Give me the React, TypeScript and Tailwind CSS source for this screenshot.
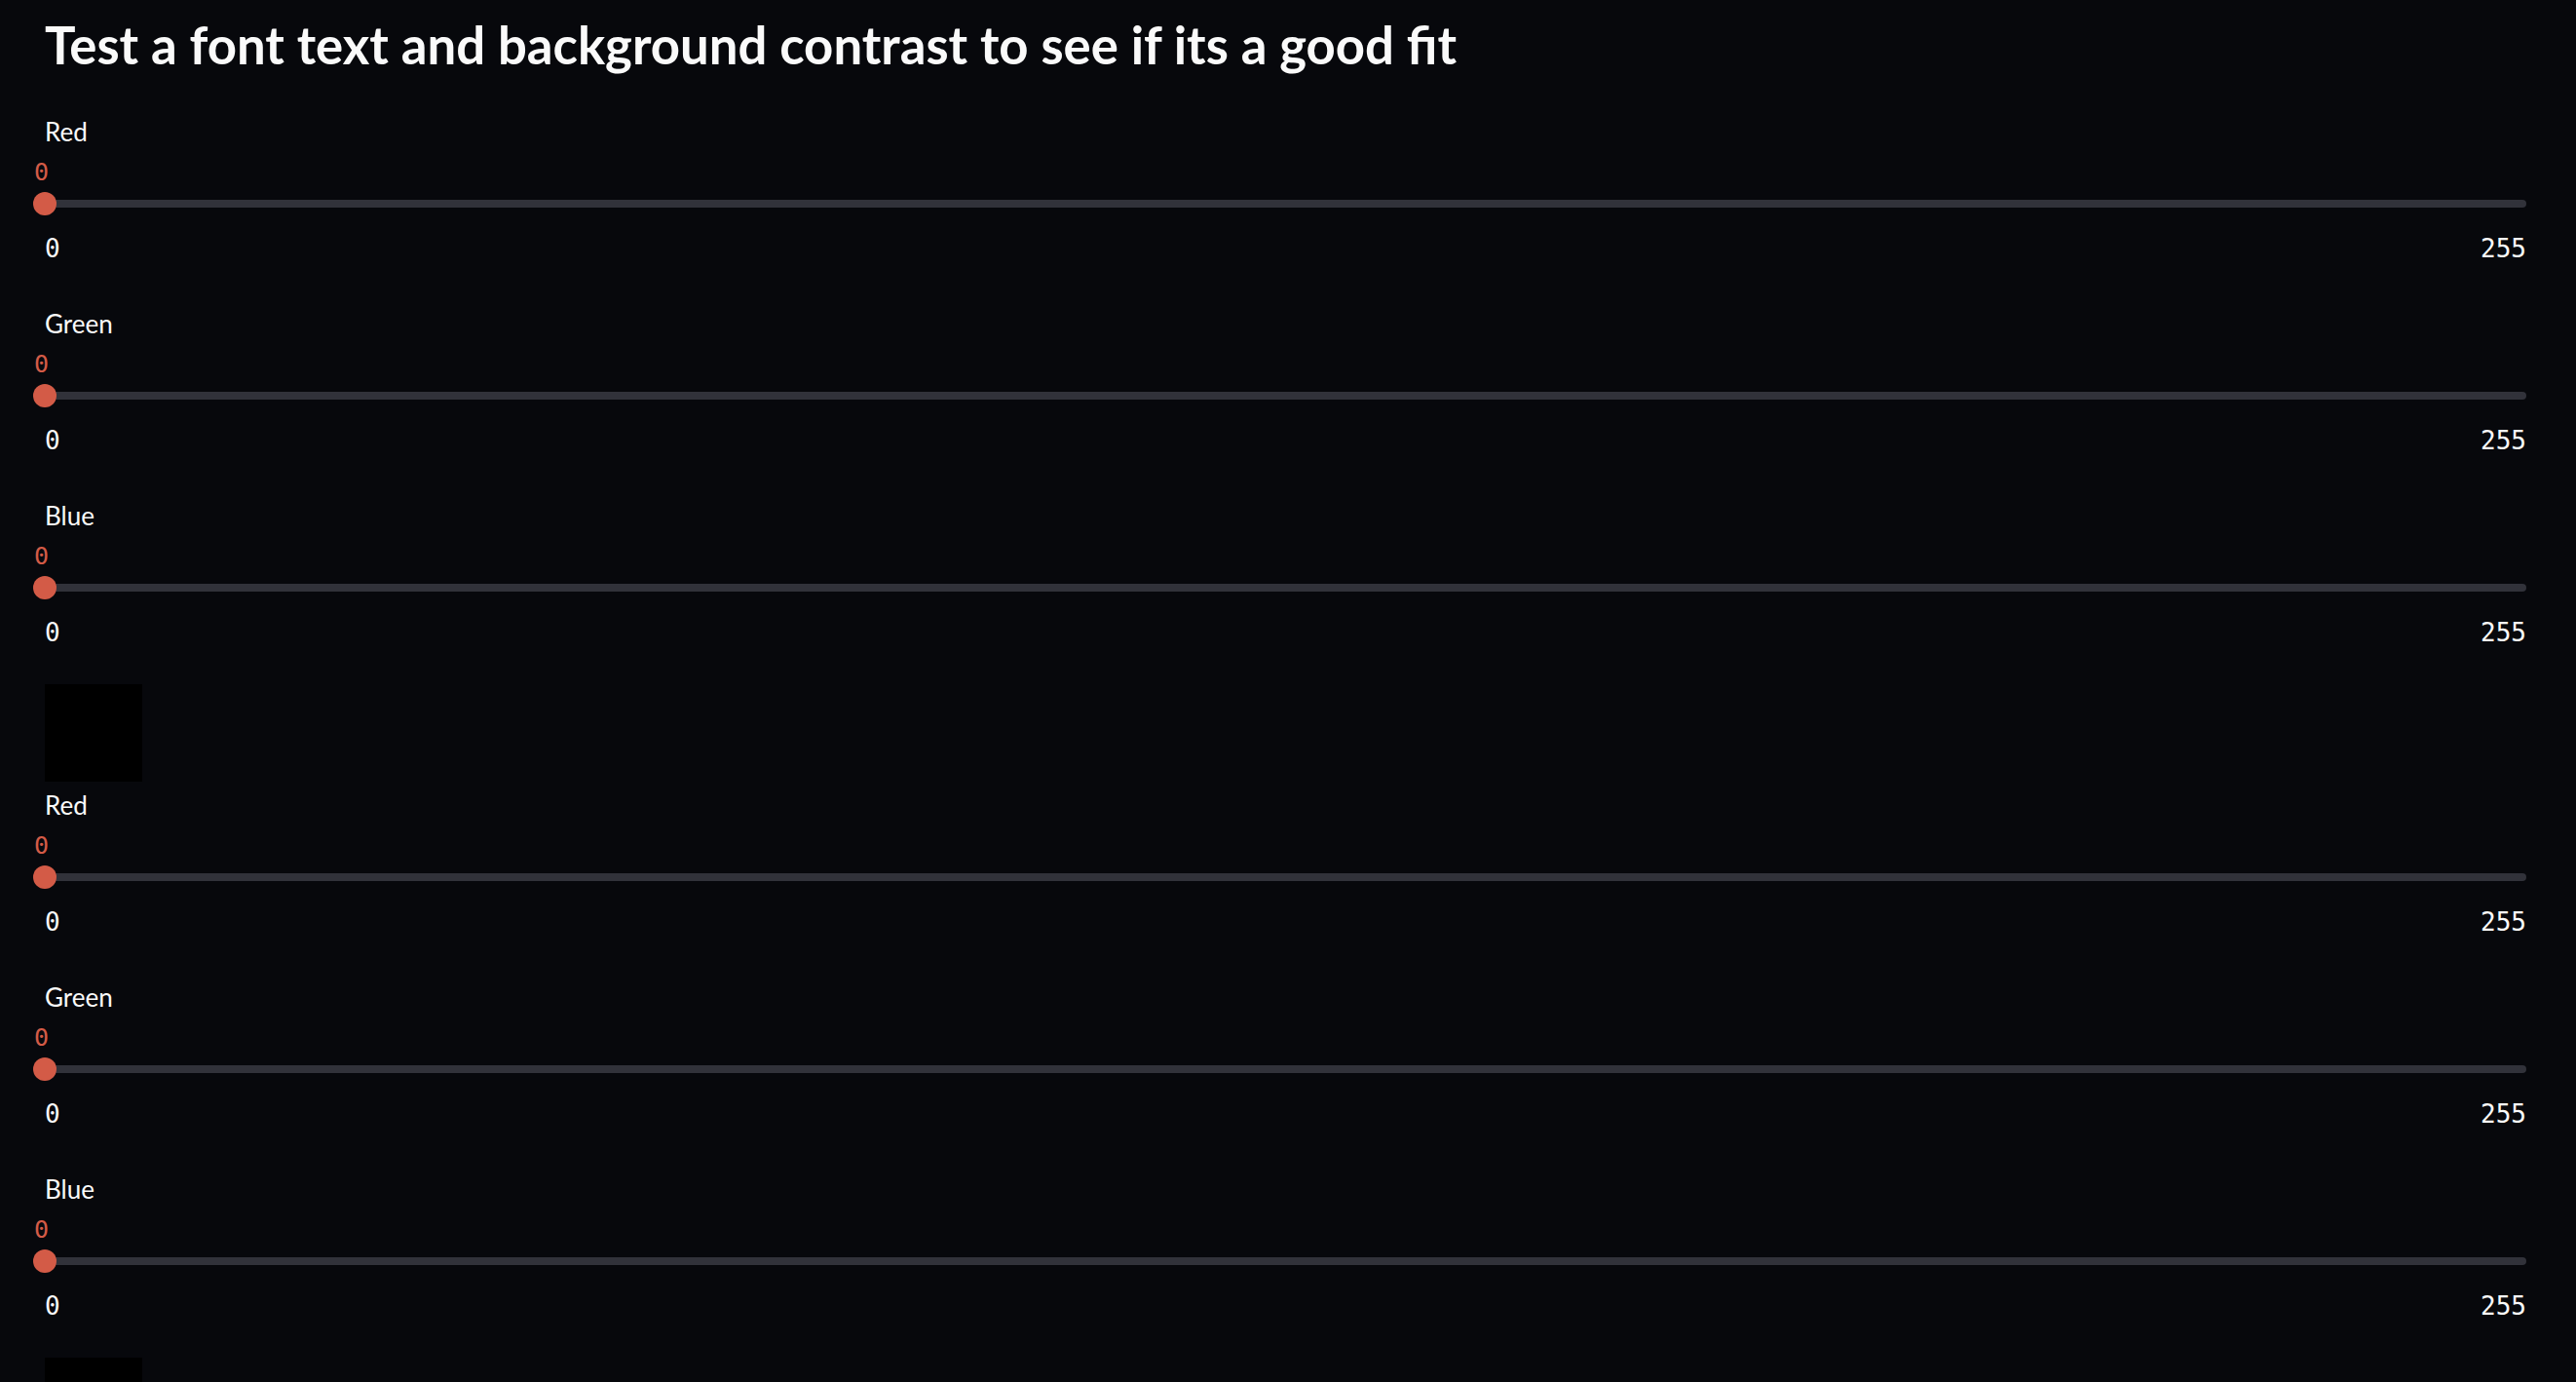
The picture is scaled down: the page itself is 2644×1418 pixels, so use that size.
import React from "react";

const channels = ["Red", "Green", "Blue"];

function ColorSlider({ label, first }: { label: string; first?: boolean }) {
  return (
    <div className={first ? "" : "mt-[47px]"}>
      <div className="text-[26px] leading-[30px] text-[#fafafa]">{label}</div>
      <div className="mt-[12px] -ml-[11px] font-['DejaVu_Sans_Mono',monospace] text-[25px] leading-[30px] text-[#d35b47]">
        0
      </div>
      <div className="relative mt-[5px] h-[24px]">
        <div className="absolute left-0 right-0 top-[8px] h-[8px] rounded-full bg-[#31323a]" />
        <div className="absolute left-[-12px] top-0 h-[24px] w-[24px] rounded-full bg-[#d35b47]" />
      </div>
      <div className="mt-[19px] flex justify-between font-['DejaVu_Sans_Mono',monospace] text-[26px] leading-[30px] text-[#fafafa]">
        <span>0</span>
        <span>255</span>
      </div>
    </div>
  );
}

function ColorGroup({ first }: { first?: boolean }) {
  return (
    <section className={first ? "mt-[43px]" : "mt-[9px]"}>
      {channels.map((c, i) => (
        <ColorSlider key={c} label={c} first={i === 0} />
      ))}
      <div className="mt-[38px] h-[100px] w-[100px] bg-black" />
    </section>
  );
}

export default function App() {
  return (
    <div className="h-[1418px] overflow-hidden bg-[#07080c] pl-[46px] pr-[51px] font-['Lato',sans-serif]">
      <h1 className="mt-[15px] text-[52.7px] font-bold leading-[62px] text-[#fafafa]">
        Test a font text and background contrast to see if its a good fit
      </h1>
      <ColorGroup first />
      <ColorGroup />
    </div>
  );
}
